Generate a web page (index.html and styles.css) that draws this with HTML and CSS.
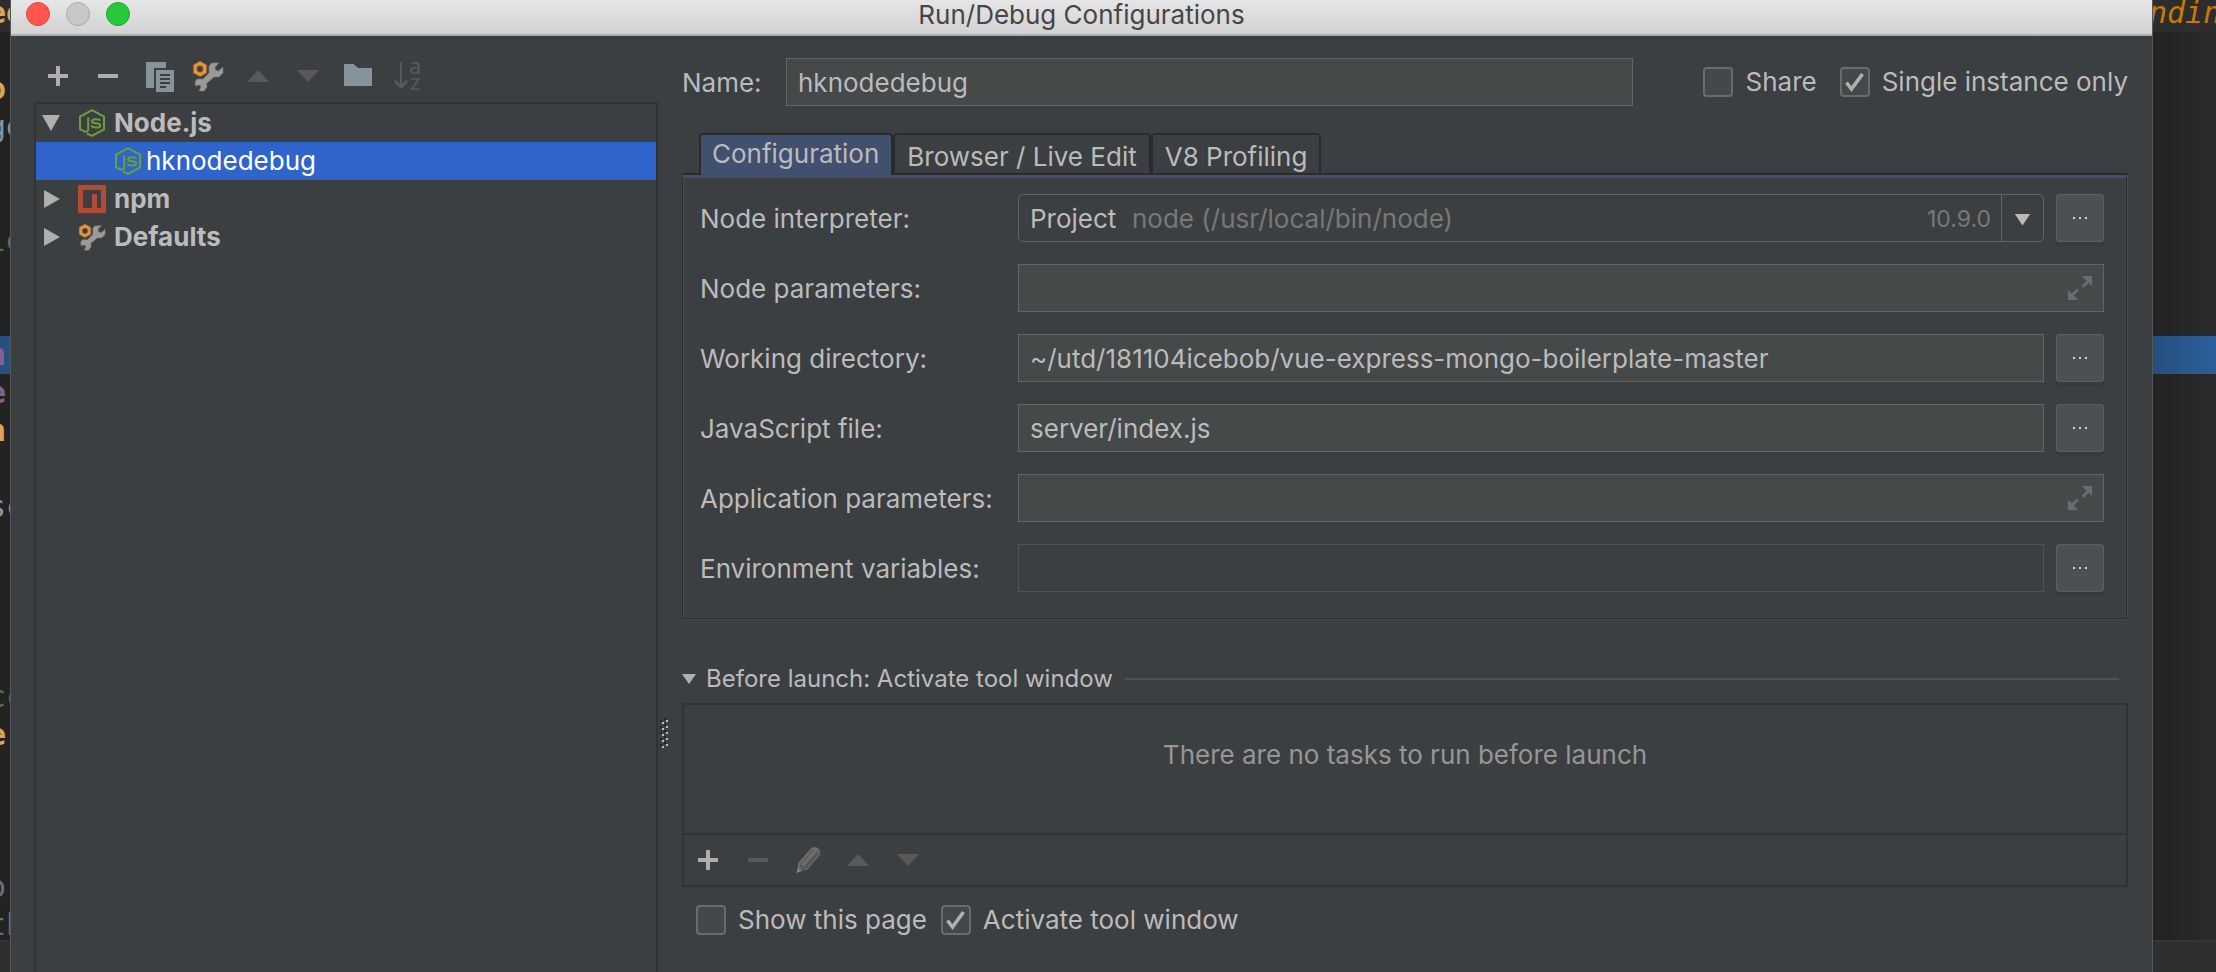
FILE: index.html
```html
<!DOCTYPE html>
<html lang="en">
<head>
<meta charset="utf-8">
<title>Run/Debug Configurations</title>
<link rel="stylesheet" href="styles.css">
</head>
<body>
<svg class="sprite" aria-hidden="true">
  <symbol id="plus" viewBox="0 0 32 32"><path fill="currentColor" d="M14 6h4v8h8v4h-8v8h-4v-8H6v-4h8z"/></symbol>
  <symbol id="minus" viewBox="0 0 32 32"><path fill="currentColor" d="M6 14h20v4H6z"/></symbol>
  <symbol id="up" viewBox="0 0 32 32"><path fill="currentColor" d="M5 22 16 10 27 22z"/></symbol>
  <symbol id="down" viewBox="0 0 32 32"><path fill="currentColor" d="M5 10h22L16 22z"/></symbol>
  <symbol id="copy" viewBox="0 0 32 32"><path fill="#87939a" d="M4 2h20v6H12v20H4z"/><path fill="#87939a" fill-rule="evenodd" d="M14 10h18v22H14zM18 14v2h10v-2zM18 18v2h10v-2zM18 22v2h10v-2zM18 26v2h6v-2z"/></symbol>
  <symbol id="folder" viewBox="0 0 32 32"><path fill="#87939a" d="M2 4h9.500l4.500 4h14v18H2z"/></symbol>
  <symbol id="wrench" viewBox="0 0 32 32">
    <path fill="#9a9a9a" stroke="#777" stroke-width=".6" d="M19.500 3H27l-4 4 .5 3 3 1 4.500-4v6l-4 4h-5l-7.500 6.500.5 3.500-3 4H7l2-4-1.500-2-4 1L3 22l2-3h6l6-6V6z"/>
    <path fill="#e0983a" stroke="#a9652b" stroke-width=".8" d="M8 1.200 14.600 5v8L8 16.600 1.400 13V5z"/>
    <circle cx="8" cy="9" r="3.200" fill="#3c3f41" stroke="#a9652b" stroke-width=".8"/>
  </symbol>
  <symbol id="node" viewBox="0 0 28 28"><g fill="none" stroke="#6a9f3c" stroke-width="2"><path d="M10.200 8.500V20q0 3.300-3.200 2.600L2 20.200V7.700L14 1.200l12 6.500v12.600L14 26.800l-5-2.300"/><path d="M22.200 11.700Q21.500 10.200 18 10.200q-4 0-4 2t4 2.100q4.300.2 4.300 2.300T18 18.600q-4 0-4.500-2.200"/></g></symbol>
  <symbol id="npm" viewBox="0 0 28 28"><path fill="#b24a38" fill-rule="evenodd" d="M0 0h28v28H0zM5 5v18h9V9h5v14h4V5z"/></symbol>
  <symbol id="expand" viewBox="0 0 24 24"><g fill="#646e73"><path d="M14 0h10v10l-3.300-3.300-5.200 5.200-2-2 5-5zM0 14l3.700 3.500 5-5 2 2-5 5L10 24H0z"/></g></symbol>
  <symbol id="dots" viewBox="0 0 14 2"><path fill="#d0d0d0" d="M0 0h2v2H0zM6 0h2v2H6zM12 0h2v2h-2z"/></symbol>
  <symbol id="check" viewBox="0 0 30 30"><path fill="none" stroke="#b0b0b0" stroke-width="3.600" d="M6.500 15.500 11.500 22 22.500 7"/></symbol>
</svg>

<div class="desktop">
  <div class="editor editor-left" aria-hidden="true">
    <div class="lines">
      <div class="line gold caret">ee</div><div class="line"></div><div class="line gold">o</div><div class="line slate">ge</div>
      <div class="line"></div><div class="line"></div><div class="line green">le</div><div class="line"></div><div class="line"></div>
      <div class="line purple selected">n</div><div class="line purple">e</div><div class="line gold">n</div><div class="line"></div>
      <div class="line slate">sc</div><div class="line"></div><div class="line"></div><div class="line"></div><div class="line"></div>
      <div class="line green">cc</div><div class="line gold">e</div><div class="line"></div><div class="line"></div><div class="line"></div>
      <div class="line gray">o</div><div class="line gray">th</div>
    </div>
    <div class="status"></div>
  </div>

  <main class="dialog">
    <header class="titlebar">
      <div class="lights">
        <button class="light close" aria-label="Close"></button>
        <button class="light minimize" aria-label="Minimize"></button>
        <button class="light maximize" aria-label="Zoom"></button>
      </div>
      <h1 class="title">Run/Debug Configurations</h1>
    </header>

    <div class="content">
      <aside class="sidebar">
        <div class="toolbar">
          <button class="tool" aria-label="Add"><svg><use href="#plus"/></svg></button>
          <button class="tool" aria-label="Remove"><svg><use href="#minus"/></svg></button>
          <button class="tool" aria-label="Copy"><svg><use href="#copy"/></svg></button>
          <button class="tool" aria-label="Edit defaults"><svg><use href="#wrench"/></svg></button>
          <button class="tool dim" aria-label="Move up"><svg><use href="#up"/></svg></button>
          <button class="tool dim" aria-label="Move down"><svg><use href="#down"/></svg></button>
          <button class="tool" aria-label="New folder"><svg><use href="#folder"/></svg></button>
          <button class="tool dim" aria-label="Sort"><svg viewBox="0 0 32 32"><path fill="none" stroke="currentColor" stroke-width="2" d="M9 2v26"/><path fill="none" stroke="currentColor" stroke-width="3" d="m3 21 6 6 6-6"/><text class="sort-text" x="17" y="14">a</text><text class="sort-text" x="18" y="30">z</text></svg></button>
        </div>
        <ul class="tree" role="tree">
          <li class="node" role="treeitem" aria-expanded="true"><span class="arrow open"></span><svg class="node-icon"><use href="#node"/></svg><span>Node.js</span></li>
          <li class="node child" role="treeitem" aria-selected="true"><svg class="node-icon"><use href="#node"/></svg><span>hknodedebug</span></li>
          <li class="node" role="treeitem" aria-expanded="false"><span class="arrow"></span><svg class="node-icon"><use href="#npm"/></svg><span>npm</span></li>
          <li class="node" role="treeitem" aria-expanded="false"><span class="arrow"></span><svg class="node-icon"><use href="#wrench"/></svg><span>Defaults</span></li>
        </ul>
      </aside>

      <div class="splitter"><svg class="grip" viewBox="0 0 8 30"><path stroke="#222" stroke-width="2" stroke-dasharray="2 4" d="M1 2v28M5 0v30"/><path stroke="#bbb" stroke-width="2" stroke-dasharray="2 4" d="M3 4v26M7 2v26"/></svg></div>

      <section class="settings">
        <div class="name-row">
          <label for="name">Name:</label>
          <input class="field" id="name" type="text" value="hknodedebug">
          <div class="checks">
            <label class="check"><span class="box"><input type="checkbox"></span>Share</label>
            <label class="check"><span class="box"><input type="checkbox" checked><svg><use href="#check"/></svg></span>Single instance only</label>
          </div>
        </div>

        <div class="tabs" role="tablist">
          <button class="tab active" role="tab" aria-selected="true">Configuration</button>
          <button class="tab" role="tab" aria-selected="false">Browser / Live Edit</button>
          <button class="tab" role="tab" aria-selected="false">V8 Profiling</button>
        </div>

        <div class="panel" role="tabpanel">
          <div class="form">
            <label for="interp">Node interpreter:</label>
            <div class="control">
              <div class="combo">
                <select id="interp"><option>Project</option></select>
                <div class="combo-info"><span class="path">node (/usr/local/bin/node)</span><span class="version">10.9.0</span><span class="combo-arrow"></span></div>
              </div>
              <button class="more" aria-label="Browse interpreters"><svg><use href="#dots"/></svg></button>
            </div>

            <label for="nparams">Node parameters:</label>
            <div class="control expandable"><input class="field" id="nparams" type="text"><button class="expand" aria-label="Expand"><svg><use href="#expand"/></svg></button></div>

            <label for="wdir">Working directory:</label>
            <div class="control"><input class="field" id="wdir" type="text" value="~/utd/181104icebob/vue-express-mongo-boilerplate-master"><button class="more" aria-label="Browse directory"><svg><use href="#dots"/></svg></button></div>

            <label for="jsfile">JavaScript file:</label>
            <div class="control"><input class="field" id="jsfile" type="text" value="server/index.js"><button class="more" aria-label="Browse file"><svg><use href="#dots"/></svg></button></div>

            <label for="aparams">Application parameters:</label>
            <div class="control expandable"><input class="field" id="aparams" type="text"><button class="expand" aria-label="Expand"><svg><use href="#expand"/></svg></button></div>

            <label for="env">Environment variables:</label>
            <div class="control"><input class="field readonly" id="env" type="text" readonly><button class="more" aria-label="Edit variables"><svg><use href="#dots"/></svg></button></div>
          </div>
        </div>

        <h2 class="launch-title"><span class="arrow-small"></span>Before launch: Activate tool window<span class="rule"></span></h2>
        <div class="launch">
          <p class="empty">There are no tasks to run before launch</p>
          <div class="toolbar launch-tools">
            <button class="tool" aria-label="Add task"><svg><use href="#plus"/></svg></button>
            <button class="tool dim" aria-label="Remove task"><svg><use href="#minus"/></svg></button>
            <button class="tool dim" aria-label="Edit task"><svg viewBox="0 0 32 32"><path fill="#626262" d="M7 19 20 4h5l3 4v3L15 26l-8 1z"/><path fill="none" stroke="#808080" stroke-width="1" d="M7 19 20 4h5l3 4M11 21 24 6M7 19l-1 7"/><path fill="none" stroke="#404040" stroke-width="1" d="m13 24 13-15M8 21l5 4"/><path fill="#808080" d="m4 29 2-5 4 3z"/></svg></button>
            <button class="tool dim" aria-label="Move task up"><svg><use href="#up"/></svg></button>
            <button class="tool dim" aria-label="Move task down"><svg><use href="#down"/></svg></button>
          </div>
        </div>
        <div class="checks launch-checks">
          <label class="check"><span class="box"><input type="checkbox"></span>Show this page</label>
          <label class="check"><span class="box"><input type="checkbox" checked><svg><use href="#check"/></svg></span>Activate tool window</label>
        </div>
      </section>
    </div>
  </main>

  <div class="editor editor-right" aria-hidden="true">
    <div class="lines">
      <div class="line caret keyword">nding</div><div class="line"></div><div class="line"></div><div class="line"></div><div class="line"></div>
      <div class="line"></div><div class="line"></div><div class="line"></div><div class="line"></div><div class="line selected"></div>
    </div>
    <div class="status"></div>
  </div>
</div>
</body>
</html>
```
FILE: styles.css
```css
* { box-sizing: border-box; }

body {
  margin: 0;
  background: #2b2b2b;
  color: #bbbbbb;
  font: 26px/32px Inter, "Liberation Sans", sans-serif;
}

button, input, select { font: inherit; color: inherit; margin: 0; }
button { padding: 0; border: 0; background: none; }
svg { display: block; }
.sprite { display: none; }

.desktop {
  display: grid;
  grid-template-columns: 10px minmax(0, 1fr) 63px;
  height: 100vh;
  min-height: 960px;
  overflow: hidden;
}

/* Editor strips visible on both sides of the dialog */
.editor { display: flex; flex-direction: column; overflow: hidden; background: #232323; }
.editor-right { background: linear-gradient(90deg, #222222, #2b2b2b); }
.lines { flex: 1; min-height: 0; margin-top: -6px; overflow: hidden; }
.line {
  height: 38px;
  font: 30px/38px "DejaVu Sans Mono", monospace;
  white-space: pre;
  text-indent: -12px;
}
.editor-right .line { text-indent: -4px; }
.caret { background: #2d2d2d; }
.selected { background: #25507f; }
.editor-right .selected { background: linear-gradient(90deg, #25507f, #2d5f9b); }
.gold { color: #d9a657; font-weight: bold; }
.slate { color: #8795a5; }
.green { color: #567446; }
.purple { color: #82628c; font-weight: bold; }
.gray { color: #6f6f6f; }
.keyword { color: #c67a05; font-style: italic; }
.status { height: 32px; border-top: 2px solid #353535; background: #2d2f31; }

/* Dialog frame */
.dialog {
  display: flex;
  flex-direction: column;
  min-width: 0;
  border: solid #555758;
  border-width: 0 1px;
  background: #3c3f41;
}
.titlebar {
  display: grid;
  grid-template-columns: 1fr auto 1fr;
  align-items: start;
  height: 36px;
  border-bottom: 2px solid #acaeae;
  background: linear-gradient(#e6e6e6, #d2d2d2);
}
.lights { display: flex; gap: 16px; padding: 2px 15px; }
.light { width: 24px; height: 24px; border: 1px solid #e2453f; border-radius: 50%; background: #ff574f; }
.minimize { border-color: #a9a9a9; background: #c8c8c8; }
.maximize { border-color: #1ca62e; background: #27c93b; }
.title { margin: 0; color: #464646; font-size: 26px; font-weight: 400; line-height: 30px; }

.content {
  flex: 1;
  display: grid;
  grid-template-columns: 624px 24px minmax(0, 1fr);
  padding: 22px 24px 0 23px;
}

/* Configuration tree */
.sidebar { display: flex; flex-direction: column; gap: 10px; padding-top: 2px; }
.toolbar { display: flex; align-items: center; gap: 18px; padding-left: 8px; }
.tool { width: 32px; height: 32px; color: #afafaf; }
.tool svg { width: 32px; height: 32px; }
.tool.dim { color: #595959; }
.sort-text { font: 22px "Noto Sans", sans-serif; fill: currentColor; }
.tree {
  flex: 1;
  margin: 0;
  padding: 0;
  list-style: none;
  border: 2px solid #323232;
  border-bottom: 0;
}
.node { display: flex; align-items: center; height: 38px; padding-left: 6px; font-weight: 700; }
.node-icon { width: 28px; height: 28px; margin-right: 8px; }
.arrow { width: 36px; height: 18px; }
.arrow::before {
  content: "";
  display: block;
  width: 18px;
  height: 18px;
  margin-left: 1px;
  background: #afafaf;
  clip-path: polygon(6% 0, 94% 50%, 6% 100%);
}
.arrow.open::before { margin-left: 0; clip-path: polygon(0 6%, 100% 6%, 50% 94%); }
.child { padding-left: 78px; background: #2f65ca; color: #ffffff; font-weight: 400; }
.child .node-icon { margin-right: 4px; }

.splitter { padding: 660px 2px 0; }
.grip { width: 8px; height: 30px; }

/* Shared controls */
.field {
  flex: 1;
  min-width: 0;
  height: 48px;
  padding: 1px 12px 0 11px;
  border: 1px solid #646464;
  border-radius: 0;
  background: #45494a;
}
.field.readonly { border-color: #515354; background: transparent; }
.checks { display: flex; gap: 23px; }
.check { display: flex; align-items: center; gap: 12px; white-space: nowrap; }
.box { display: grid; width: 30px; height: 30px; }
.box > * { grid-area: 1 / 1; width: 30px; height: 30px; margin: 0; }
.box svg { pointer-events: none; }
.box input { appearance: none; border: 2px solid #6b6b6b; border-radius: 4px; background: #43494a; }

.settings { min-width: 0; }
.name-row { display: flex; align-items: center; }
.name-row > label { width: 104px; padding-top: 2px; }
.name-row .checks { margin-left: 70px; }

/* Tabs */
.tabs { display: flex; margin-top: 27px; padding-left: 17px; box-shadow: inset 0 -2px #2b2b2b; }
.tab {
  height: 42px;
  padding: 6px 12px 0;
  border: 2px solid #2b2b2b;
  border-radius: 4px 4px 0 0;
}
.tab.active { padding: 0 12px 2px 11px; border-bottom: 0; background: #425070; }
.panel {
  padding: 16px 22px 26px 16px;
  border: 1px solid #2b2b2b;
  border-top: 3px solid #425070;
  box-shadow: inset 1px 0 #3d4a68, 0 1px #3d4a68, 1px 0 #3d4a68;
  margin-right: 1px;
}
.form { display: grid; grid-template-columns: 319px minmax(0, 1fr); gap: 22px 0; align-items: center; }
.form > label { padding: 2px 0 0 1px; }
.control { display: flex; gap: 12px; }
.more {
  display: grid;
  place-items: center;
  width: 48px;
  height: 48px;
  border: 1px solid #5e6060;
  border-radius: 3px;
  background: #4c5052;
  box-shadow: 0 4px #39393b;
}
.more svg { width: 14px; height: 2px; }
.expandable { display: grid; gap: 0; align-items: center; }
.expandable > * { grid-area: 1 / 1; }
.expand { justify-self: end; width: 24px; height: 24px; margin-right: 12px; }
.expand svg { width: 24px; height: 24px; }

.combo { flex: 1; display: grid; height: 48px; border: 1px solid #646464; border-radius: 5px; }
.combo > * { grid-area: 1 / 1; }
.combo select { appearance: none; padding: 2px 11px 0; border: 0; background: transparent; }
.combo-info { display: flex; align-items: center; padding-left: 113px; color: #787878; pointer-events: none; }
.path { flex: 1; padding-top: 2px; }
.version { padding: 2px 10px 0 0; font-size: 23px; }
.combo-arrow { display: grid; place-items: center; width: 42px; height: 46px; padding-top: 3px; border-left: 1px solid #646464; }
.combo-arrow::before { content: ""; width: 16px; height: 12px; background: #bbbbbb; clip-path: polygon(0 0, 100% 0, 50% 100%); }

/* Before launch */
.launch-title { display: flex; align-items: center; margin: 44px 0 8px; font-size: 24px; font-weight: 400; }
.arrow-small { width: 14px; height: 10px; margin-right: 10px; background: #afafaf; clip-path: polygon(0 0, 100% 0, 50% 100%); }
.rule { flex: 1; height: 2px; margin: 0 9px 0 12px; background: #515151; }
.launch { border: 2px solid #323232; }
.empty { margin: 0; padding: 34px 0 62px; color: #969696; text-align: center; }
.launch-tools { height: 52px; border-top: 2px solid #323232; }
.launch-checks { gap: 14px; padding: 17px 14px; }
```
